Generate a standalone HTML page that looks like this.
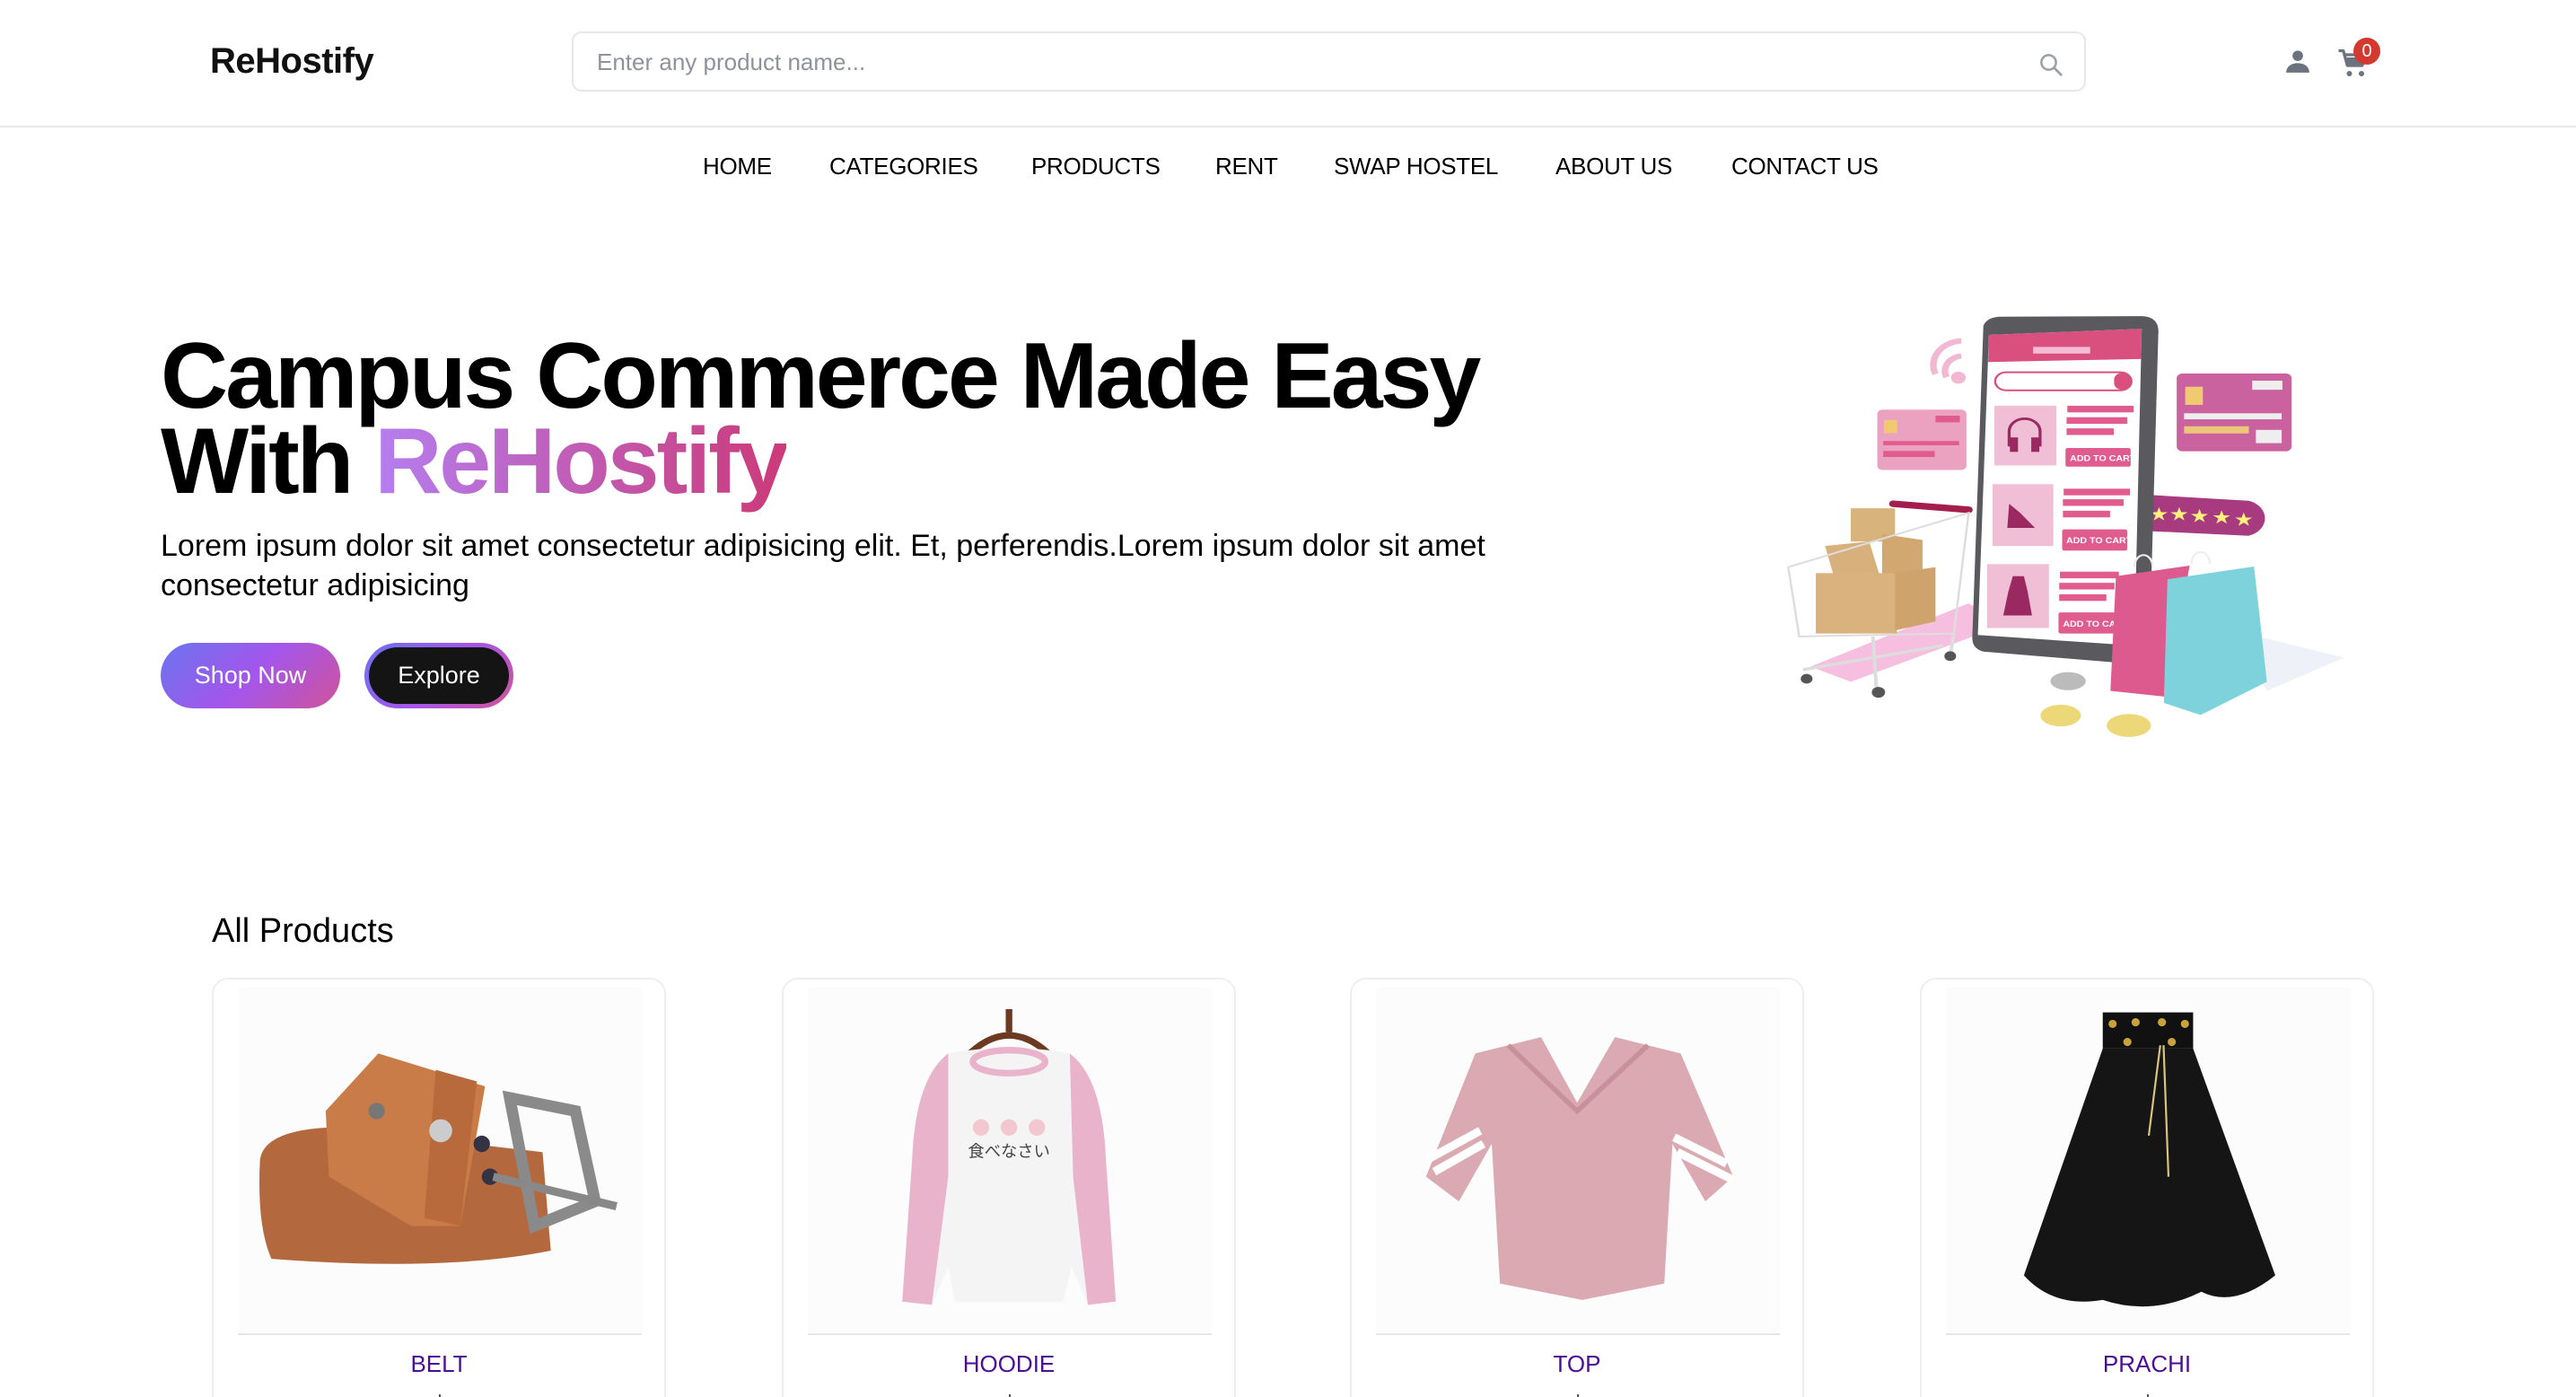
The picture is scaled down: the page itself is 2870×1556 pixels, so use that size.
<!DOCTYPE html>
<html><head><meta charset="utf-8"><style>
*{margin:0;padding:0;box-sizing:border-box}
html{overflow:hidden;height:1556px}
body{width:2870px;height:1556px;overflow:hidden;background:#fff;font-family:"Liberation Sans",Arial,sans-serif;color:#000;position:relative}
.a{position:absolute}
.logo{left:234px;top:46px;font-size:40px;font-weight:bold;color:#111;letter-spacing:-0.5px}
.search{left:637px;top:35px;width:1687px;height:67px;border:2px solid #e6e7ea;border-radius:11px}
.search span{position:absolute;left:26px;top:17px;font-size:26px;color:#8e929b}
.hr{left:0;top:140px;width:2870px;height:2px;background:#e8e8ea}
.nav{top:170px;font-size:26px;color:#000;letter-spacing:-0.3px}
h1{position:absolute;left:179px;top:372px;font-size:104px;line-height:95px;font-weight:bold;letter-spacing:-3px}
.grad{background:linear-gradient(90deg,#b57ef0,#cc3a78);-webkit-background-clip:text;background-clip:text;color:transparent}
.p{left:179px;top:586px;width:1600px;font-size:34px;line-height:44px}
.btn1{left:179px;top:716px;width:200px;height:73px;border-radius:37px;background:linear-gradient(135deg,#6a74ee,#a356ec 50%,#d0539a);color:#fff;font-size:27px;text-align:center;line-height:73px}
.btn2{left:406px;top:716px;width:166px;height:73px;border-radius:37px;background:linear-gradient(135deg,#6a74ee,#a356ec 50%,#d0539a);padding:5px}
.btn2 div{width:100%;height:100%;border-radius:32px;background:#141414;color:#fff;font-size:27px;text-align:center;line-height:63px}
.ap{left:236px;top:1016px;font-size:38px;font-weight:500}
.card{top:1089px;width:506px;height:500px;border:2px solid #eeeef0;border-radius:18px;background:#fff;overflow:hidden}
.card .img{position:absolute;left:27px;top:9px;width:450px;height:384px;background:#fcfcfc}
.card .div{position:absolute;left:27px;top:394px;width:450px;height:2px;background:#e6e6e8}
.card .t{position:absolute;left:0;width:100%;top:413px;text-align:center;font-size:26px;color:#4b0e96;font-weight:500}
.card .tick{position:absolute;left:50%;top:462px;width:2px;height:10px;background:#555}
</style></head><body>
<div class="a logo">ReHostify</div>
<div class="a search"><span>Enter any product name...</span>
<svg class="a" style="right:22px;top:20px" width="30" height="30" viewBox="0 0 24 24"><circle cx="10" cy="10" r="6.5" fill="none" stroke="#9aa0a8" stroke-width="2"/><path d="M15 15l6 6" stroke="#9aa0a8" stroke-width="2.2" stroke-linecap="round"/></svg></div>
<svg class="a" style="left:2546px;top:54px" width="28" height="28" viewBox="0 0 24 24"><circle cx="12" cy="7" r="5" fill="#6b7280"/><path d="M1 23c0-6 5-9 11-9s11 3 11 9z" fill="#6b7280"/></svg>
<svg class="a" style="left:2604px;top:52px" width="36" height="36" viewBox="0 0 24 24"><path d="M1 3h3.5l3 11h11l2.5-8H6" fill="none" stroke="#6b7280" stroke-width="2.2" stroke-linejoin="round"/><path d="M7 8h13l-2 6H8z" fill="#6b7280"/><circle cx="9" cy="20" r="2" fill="#6b7280"/><circle cx="18" cy="20" r="2" fill="#6b7280"/></svg>
<div class="a" style="left:2622px;top:42px;width:30px;height:30px;border-radius:50%;background:#d23a2f;color:#fff;font-size:20px;text-align:center;line-height:30px">0</div>
<div class="a hr"></div>
<div class="a nav" style="left:783px">HOME</div>
<div class="a nav" style="left:924px">CATEGORIES</div>
<div class="a nav" style="left:1149px">PRODUCTS</div>
<div class="a nav" style="left:1354px">RENT</div>
<div class="a nav" style="left:1486px">SWAP HOSTEL</div>
<div class="a nav" style="left:1733px">ABOUT US</div>
<div class="a nav" style="left:1929px">CONTACT US</div>
<h1>Campus Commerce Made Easy<br>With <span class="grad">ReHostify</span></h1>
<div class="a p">Lorem ipsum dolor sit amet consectetur adipisicing elit. Et, perferendis.Lorem ipsum dolor sit amet consectetur adipisicing</div>
<div class="a btn1">Shop Now</div>
<div class="a btn2"><div>Explore</div></div>

<svg class="a" style="left:1980px;top:336px" width="640" height="504" viewBox="0 0 1560 1500" preserveAspectRatio="none">
<path d="M90 1210 L520 1000 L620 1070 L200 1260z" fill="#f6bfe0"/>
<path d="M1240 1090 L1540 1180 L1330 1290z" fill="#eef1f7"/>
<path d="M430 240a80 80 0 0 1 70-110M460 250a50 50 0 0 1 40-70" fill="none" stroke="#f2b8d3" stroke-width="18"/><circle cx="492" cy="252" r="20" fill="#f2b8d3"/>
<rect x="272" y="358" width="242" height="200" rx="14" fill="#eba2c1"/>
<rect x="430" y="378" width="66" height="22" fill="#e05b8e"/><rect x="288" y="462" width="206" height="14" fill="#e05b8e"/><rect x="288" y="495" width="140" height="20" fill="#e05b8e"/><rect x="290" y="392" width="36" height="44" fill="#f1c970"/>
<rect x="1085" y="238" width="312" height="258" rx="16" fill="#c9629f"/><rect x="1290" y="262" width="82" height="30" fill="#eee"/><rect x="1105" y="370" width="265" height="20" fill="#eee"/><rect x="1105" y="413" width="176" height="24" fill="#eac57a"/><rect x="1300" y="425" width="70" height="44" fill="#eee"/><rect x="1108" y="282" width="48" height="60" fill="#f1c970"/>
<path d="M1000 640 L1280 660 a60 60 0 0 1 0 116 L1000 760z" fill="#a83a80"/>
<g fill="#fff27a" font-size="60" font-family="DejaVu Sans">
<text x="1010" y="725">★</text><text x="1065" y="725">★</text><text x="1120" y="730">★</text><text x="1180" y="735">★</text><text x="1240" y="742">★</text></g>
<path d="M560 80 Q570 50 610 50 L990 48 Q1040 50 1035 110 L1010 1190 L960 1200 L560 1160 Q528 1150 530 1110z" fill="#5a5a5e"/>
<path d="M575 110 L990 90 L970 1140 L545 1105z" fill="#fff"/>
<path d="M575 110 L990 90 L988 190 L573 200z" fill="#d9507f"/>
<rect x="695" y="150" width="155" height="22" fill="#f5bdd5"/>
<rect x="592" y="234" width="370" height="60" rx="30" fill="#fff" stroke="#d9507f" stroke-width="6"/><rect x="915" y="236" width="46" height="56" rx="22" fill="#d9507f"/>
<rect x="590" y="345" width="168" height="198" fill="#f1bfd5"/><rect x="585" y="605" width="165" height="205" fill="#f1bfd5"/><rect x="570" y="870" width="168" height="212" fill="#f1bfd5"/>
<path d="M630 480v-50a42 42 0 0 1 84 0v50" fill="none" stroke="#9a2861" stroke-width="8"/><rect x="632" y="450" width="22" height="48" fill="#9a2861"/><rect x="690" y="450" width="22" height="48" fill="#9a2861"/>
<path d="M625 750 L630 670 L660 700 L700 750z" fill="#9a2861"/>
<path d="M640 910h30l10 50 12 80h-78l14-80z" fill="#9a2861"/>
<g fill="#e05b8e"><rect x="788" y="345" width="180" height="22"/><rect x="786" y="383" width="165" height="22"/><rect x="786" y="420" width="128" height="22"/><rect x="783" y="485" width="177" height="62" rx="6"/>
<rect x="778" y="620" width="180" height="22"/><rect x="776" y="655" width="165" height="22"/><rect x="776" y="693" width="128" height="22"/><rect x="774" y="755" width="177" height="70" rx="6"/>
<rect x="768" y="895" width="160" height="22"/><rect x="766" y="932" width="150" height="22"/><rect x="766" y="970" width="128" height="22"/><rect x="764" y="1030" width="170" height="70" rx="6"/></g>
<g fill="#fff" font-size="26" font-family="Liberation Sans" font-weight="bold"><text x="795" y="528">ADD TO CART</text><text x="785" y="800">ADD TO CART</text><text x="776" y="1078">ADD TO CAR</text></g>
<path d="M315 670 L520 690" stroke="#a31d4d" stroke-width="22" stroke-linecap="round"/>
<path d="M200 685h120v110h-120z" fill="#d9b37c"/><path d="M130 810l120-15 30 120-120 20z" fill="#d8b07b"/><path d="M285 770l110 20v130l-110-20z" fill="#d2a870"/><path d="M105 900h220v200h-220z" fill="#dab27d"/><path d="M320 900l110-20v180l-110 30z" fill="#cfa46c"/>
<path d="M30 880 L520 700 L480 1100 L60 1110z" fill="none" stroke="#ddd" stroke-width="6"/><path d="M70 1220 L450 1140 M260 1110 L270 1290 M480 1100 L470 1170" stroke="#ddd" stroke-width="10"/>
<circle cx="80" cy="1250" r="16" fill="#555"/><circle cx="275" cy="1295" r="18" fill="#555"/><circle cx="470" cy="1175" r="16" fill="#555"/>
<path d="M920 910 L1120 875 L1060 1310 L905 1290z" fill="#dd5a8e"/><path d="M1060 920 L1295 878 L1330 1260 L1150 1370 L1050 1330z" fill="#7ed2dc"/>
<path d="M970 880 a25 40 0 0 1 50 0M1125 870a25 40 0 0 1 50 0" fill="none" stroke="#eee" stroke-width="6"/>
<ellipse cx="790" cy="1258" rx="48" ry="30" fill="#bbb"/><ellipse cx="770" cy="1372" rx="55" ry="36" fill="#ecd878"/><ellipse cx="955" cy="1405" rx="60" ry="38" fill="#ecd878"/>
</svg>

<div class="a ap">All Products</div>

<div class="a card" style="left:236px"><div class="img"></div>
<svg class="a" style="left:0;top:0" width="506" height="421" viewBox="0 0 276 230">
<path d="M28 110 Q30 92 70 90 L200 105 L205 165 Q140 178 35 170 Q26 150 28 110z" fill="#b4683d"/>
<path d="M68 80 L100 45 L165 65 L150 150 L120 150 L70 120z" fill="#c97c47"/>
<path d="M135 55 L160 62 L150 150 L128 145z" fill="#b86a3c"/>
<circle cx="99" cy="80" r="5" fill="#777"/><circle cx="138" cy="92" r="7" fill="#ccc"/><circle cx="163" cy="100" r="5" fill="#334"/><circle cx="168" cy="120" r="5" fill="#334"/>
<path d="M180 72 L220 80 L232 135 L195 150z" fill="none" stroke="#8a8a8a" stroke-width="7"/><path d="M170 120 L245 138" stroke="#888" stroke-width="5"/>
</svg>
<div class="div"></div><div class="t">BELT</div><div class="tick"></div></div>

<div class="a card" style="left:871px"><div class="img"></div>
<svg class="a" style="left:0;top:0" width="506" height="421" viewBox="0 0 276 230">
<path d="M137 18 V32 M110 48 Q137 20 164 48" fill="none" stroke="#6b3a20" stroke-width="4"/>
<path d="M100 45 Q137 38 174 45 L190 180 L202 196 L185 198 L175 175 L170 196 H104 L100 175 L90 198 L72 196 L84 180z" fill="#f4f4f4"/>
<path d="M100 45 Q80 60 78 110 L72 196 L90 198 L100 120z M174 45 Q194 60 196 110 L202 196 L185 198 L176 120z" fill="#e9b4cb"/>
<ellipse cx="137" cy="50" rx="22" ry="7" fill="none" stroke="#e9b4cb" stroke-width="4"/>
<circle cx="120" cy="90" r="5" fill="#f3c7cf"/><circle cx="137" cy="90" r="5" fill="#f3c7cf"/><circle cx="154" cy="90" r="5" fill="#f3c7cf"/>
<text x="112" y="108" font-size="10" font-family="Noto Sans CJK JP,sans-serif" fill="#444">食べなさい</text>
</svg>
<div class="div"></div><div class="t">HOODIE</div><div class="tick"></div></div>

<div class="a card" style="left:1504px"><div class="img"></div>
<svg class="a" style="left:0;top:0" width="506" height="421" viewBox="0 0 276 230">
<path d="M75 45 L115 35 L137 75 L160 35 L200 45 L232 120 L215 135 L195 100 L190 185 L140 195 L90 185 L85 100 L65 135 L45 120z" fill="#dba9b2"/>
<path d="M50 117 L80 100 M45 110 L78 92 M228 112 L196 96 M232 122 L198 105" stroke="#fff" stroke-width="5"/>
<path d="M95 40 L137 80 L180 40" fill="none" stroke="#c89098" stroke-width="3"/>
</svg>
<div class="div"></div><div class="t">TOP</div><div class="tick"></div></div>

<div class="a card" style="left:2139px"><div class="img"></div>
<svg class="a" style="left:0;top:0" width="506" height="421" viewBox="0 0 276 230">
<rect x="110" y="20" width="55" height="22" fill="#111"/>
<path d="M110 42 H165 L215 180 Q190 200 170 190 Q140 205 110 195 Q80 200 62 180z" fill="#151515"/>
<g fill="#c9a23a"><circle cx="116" cy="27" r="2.5"/><circle cx="130" cy="26" r="2.5"/><circle cx="146" cy="26" r="2.5"/><circle cx="160" cy="27" r="2.5"/><circle cx="125" cy="38" r="2.5"/><circle cx="152" cy="38" r="2.5"/></g>
<path d="M145 40 L138 95 M147 40 L150 120" stroke="#d9c47a" stroke-width="1.2"/>
</svg>
<div class="div"></div><div class="t">PRACHI</div><div class="tick"></div></div>
</body></html>
